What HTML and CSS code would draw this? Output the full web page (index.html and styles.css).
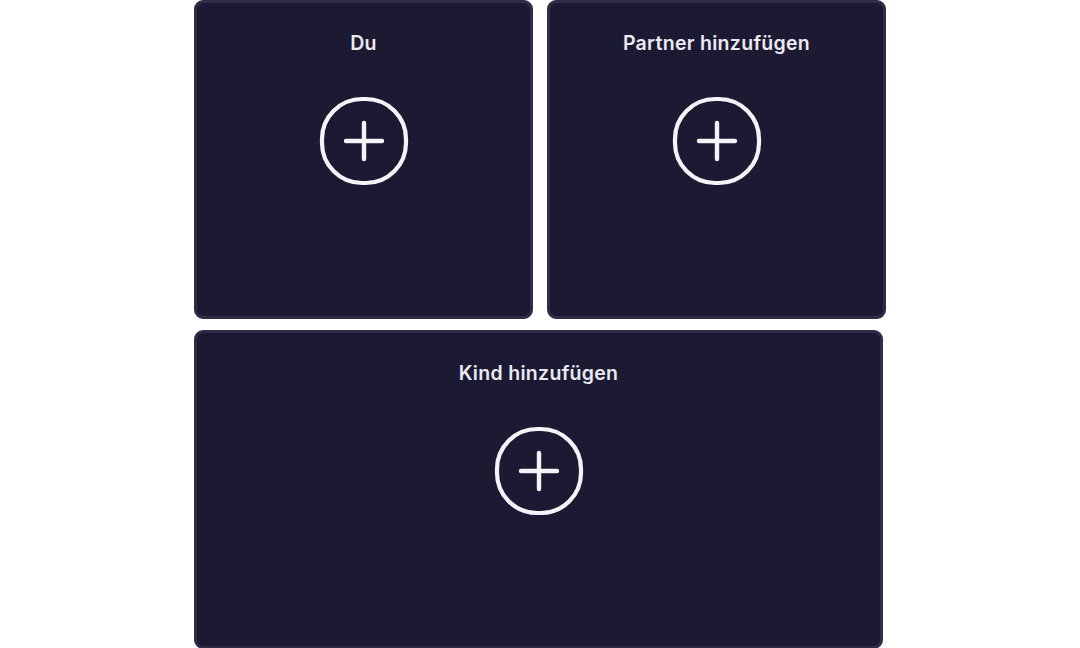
FILE: index.html
```html
<!DOCTYPE html>
<html lang="de">
<head>
<meta charset="utf-8">
<title>Familie</title>
<link rel="stylesheet" href="styles.css">
</head>
<body>
<div class="board">
  <div class="row">
    <div class="card">
      <div class="title">Du</div>
      <div class="add">
        <svg width="90" height="90" viewBox="0 0 90 90"><rect x="3" y="3" width="84" height="84" rx="40" fill="none" stroke="#f4f3f8" stroke-width="4.2"/><path d="M27 45 H63 M45 27 V63" stroke="#f4f3f8" stroke-width="4.4" stroke-linecap="round"/></svg>
      </div>
    </div>
    <div class="card">
      <div class="title">Partner hinzufügen</div>
      <div class="add">
        <svg width="90" height="90" viewBox="0 0 90 90"><rect x="3" y="3" width="84" height="84" rx="40" fill="none" stroke="#f4f3f8" stroke-width="4.2"/><path d="M27 45 H63 M45 27 V63" stroke="#f4f3f8" stroke-width="4.4" stroke-linecap="round"/></svg>
      </div>
    </div>
  </div>
  <div class="card wide">
    <div class="title">Kind hinzufügen</div>
    <div class="add">
      <svg width="90" height="90" viewBox="0 0 90 90"><rect x="3" y="3" width="84" height="84" rx="40" fill="none" stroke="#f4f3f8" stroke-width="4.2"/><path d="M27 45 H63 M45 27 V63" stroke="#f4f3f8" stroke-width="4.4" stroke-linecap="round"/></svg>
    </div>
  </div>
</div>
</body>
</html>
```
FILE: styles.css
```css
html, body {
  margin: 0;
  padding: 0;
  background: #ffffff;
  font-family: Inter, "Noto Sans", sans-serif;
}
.board {
  width: 692px;
  margin-left: 194px;
  display: flex;
  flex-direction: column;
  gap: 11px;
}
.row {
  display: flex;
  gap: 14px;
}
.card {
  box-sizing: border-box;
  flex: 1;
  height: 319px;
  background: #1c1a33;
  border: 3px solid #2e2c48;
  border-radius: 9px;
  display: flex;
  flex-direction: column;
  align-items: center;
  padding-top: 27px;
}
.card.wide {
  flex: none;
  width: 689px;
}
.title {
  color: #ebe9f2;
  font-size: 19.5px;
  font-weight: 600;
  letter-spacing: 0.3px;
  line-height: 26px;
  height: 26px;
}
.add {
  margin-top: 40px;
  width: 90px;
  height: 90px;
}
.add svg {
  display: block;
}
```
